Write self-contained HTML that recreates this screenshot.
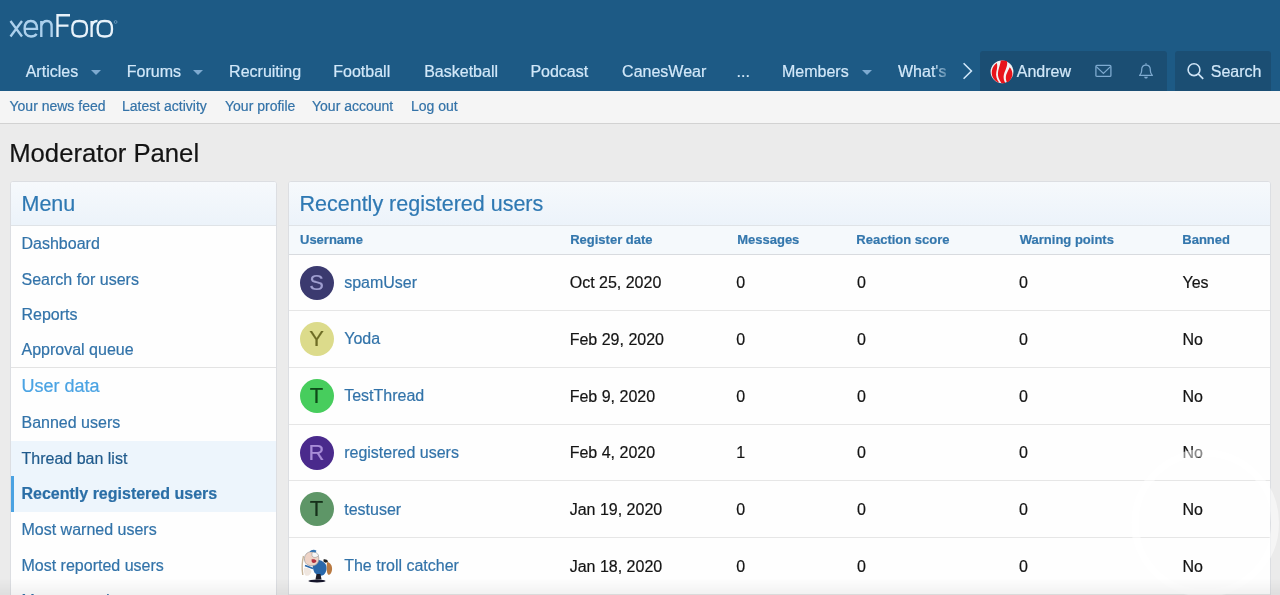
<!DOCTYPE html>
<html><head><meta charset="utf-8">
<style>
*{box-sizing:border-box;margin:0;padding:0}
html,body{width:1280px;height:595px;overflow:hidden}
body{background:#ebebeb;font-family:"Liberation Sans",sans-serif;color:#141414;position:relative}
#root{-webkit-text-stroke-width:0.2px}
.a{position:absolute;white-space:nowrap}
#hdr{position:absolute;left:0;top:0;width:1280px;height:91px;background:#1d5a85}
.nav{font-size:16px;color:#d2e8f9;line-height:18px}
.arr{position:absolute;width:0;height:0;border-left:5px solid transparent;border-right:5px solid transparent;border-top:5px solid #7eaad0}
#ugrp{position:absolute;left:980px;top:51px;width:187px;height:40px;background:#1b4e73;border-radius:3px 3px 0 0}
#sgrp{position:absolute;left:1175px;top:51px;width:96px;height:40px;background:#1b4e73;border-radius:3px 3px 0 0}
#sub{position:absolute;left:0;top:91px;width:1280px;height:33px;background:#f5f5f5;border-bottom:1px solid #d2d2d2}
.sl{font-size:14px;color:#3473a8;line-height:16px}
h1{position:absolute;left:9.2px;top:137.9px;font-size:25.7px;font-weight:400;line-height:30px;color:#141414;white-space:nowrap}
.blk{position:absolute;background:#fefefe;border:1px solid #dcdee2;border-radius:3px;overflow:hidden}
.bh{position:absolute;left:0;top:0;right:0;height:44px;background:linear-gradient(to bottom,#f6f9fc,#ecf3fa);border-bottom:1px solid #dfe3e7}
.bht{font-size:21.5px;color:#2f79b3;line-height:24px}
.mi{font-size:16px;color:#3273a9;line-height:18px}
.th{font-size:13px;font-weight:700;color:#3477ad;line-height:15px}
.td{font-size:16px;color:#141414;line-height:18px}
.un{font-size:16px;color:#3273a9;line-height:18px}
.row{position:absolute;left:0;right:0;border-bottom:1px solid #e6e6e6}
.av{position:absolute;width:34px;height:34px;border-radius:50%;font-size:22px;line-height:34px;text-align:center}
</style></head><body>
<div id="root" style="position:absolute;left:0;top:0;width:1280px;height:595px;will-change:transform">
<div id="hdr">
  <svg class="a" style="left:0;top:0" width="130" height="45" viewBox="0 0 130 45">
    <g fill="none" stroke-width="2.35" stroke-linecap="butt">
      <g stroke="#acd0ec">
        <path d="M10.5 21 L22 36.5 M22 21 L10.5 36.5"/>
        <path d="M24.6 28.8 H37 C37 23.5 34.5 21 30.8 21 C27 21 24.6 23.8 24.6 28.8 C24.6 33.6 27 36.5 31 36.5 C33.5 36.5 35.5 35.5 36.6 33.8"/>
        <path d="M41.3 37 V21 M41.3 26 C42.2 22.6 44.2 21 47 21 C50 21 51.6 23 51.6 26.5 V37"/>
      </g>
      <g stroke="#e8f2fa">
        <path d="M57.5 37 V15.2 H70 M57.5 25.6 H68.5"/>
        <path d="M79.5 21 C85.5 21 87 23.5 87 29 C87 34.5 85.5 36.5 79.5 36.5 C73.5 36.5 72.3 34.5 72.3 29 C72.3 23.5 73.5 21 79.5 21 Z"/>
        <path d="M91.6 37 V21 M91.6 27 C92 22.8 94 21 97.5 21"/>
        <path d="M104.8 21 C110.8 21 112 23.5 112 29 C112 34.5 110.8 36.5 104.8 36.5 C98.8 36.5 97.6 34.5 97.6 29 C97.6 23.5 98.8 21 104.8 21 Z"/>
      </g>
    </g>
    <circle cx="115.6" cy="22" r="1.4" fill="none" stroke="#7fa9cc" stroke-width="0.7"/>
  </svg>

  <div class="a nav" style="left:25.7px;top:63px">Articles</div>
  <div class="arr" style="left:91px;top:69.5px"></div>
  <div class="a nav" style="left:126.8px;top:63px">Forums</div>
  <div class="arr" style="left:193px;top:69.5px"></div>
  <div class="a nav" style="left:229.1px;top:63px">Recruiting</div>
  <div class="a nav" style="left:333.3px;top:63px">Football</div>
  <div class="a nav" style="left:424.2px;top:63px">Basketball</div>
  <div class="a nav" style="left:530.4px;top:63px">Podcast</div>
  <div class="a nav" style="left:622.1px;top:63px">CanesWear</div>
  <div class="a nav" style="left:736.5px;top:63px">...</div>
  <div class="a nav" style="left:782px;top:63px">Members</div>
  <div class="arr" style="left:862px;top:69.5px"></div>
  <div class="a nav" style="left:898px;top:63px;width:56px;overflow:hidden;-webkit-mask-image:linear-gradient(to right,#000 62%,rgba(0,0,0,0.2) 92%)">What's</div>
  <svg class="a" style="left:960px;top:61px" width="16" height="20" viewBox="0 0 16 20"><path d="M3.6 2.2 L11.4 10 L3.6 17.8" fill="none" stroke="#cfe6f8" stroke-width="1.6"/></svg>

  <div id="ugrp"></div>
  <svg class="a" style="left:989.5px;top:59.5px" width="24" height="24" viewBox="0 0 24 24">
    <circle cx="12" cy="11.8" r="11.4" fill="#f5f3f3"/>
    <g fill="#e8141b">
      <path d="M6.8 3 C7.6 5 7.2 8.5 6.3 12 C5.6 15.5 6.6 19.5 9.4 22.8 C6.5 22 3.5 19.5 2.2 16 C1.2 12.5 1.8 8.5 3.8 6 C4.8 4.8 5.8 3.8 6.8 3 Z"/>
      <path d="M10.8 0.6 C12.8 0.3 15 0.4 16.8 1 C17.6 2.5 17.4 5.5 15.6 9.8 C14 13.2 13.2 16 13.8 19.2 C14.1 20.8 14.7 22 15.3 22.9 C14 23.2 12.6 23.3 11.5 23.2 C10.4 21.8 9.3 20 8.6 18 C7.6 15 7.8 11.8 8.8 8.5 C9.6 5.8 10.5 3.2 10.8 0.6 Z"/>
      <path d="M19.7 7.2 C18.8 9.5 17.2 12 16.3 14.5 C15.5 17 15.7 20 16.9 22.5 C19.5 21.5 21.6 18.8 22.3 15.5 C22.8 12.5 21.8 9.5 19.7 7.2 Z"/>
    </g>
  </svg>
  <div class="a nav" style="left:1016.8px;top:63px">Andrew</div>
  <svg class="a" style="left:1094px;top:64px" width="20" height="15" viewBox="0 0 20 15">
    <rect x="1.9" y="1.4" width="15" height="11" rx="1" fill="none" stroke="#7eaad0" stroke-width="1.3"/>
    <path d="M2.3 2.6 L9.4 9.4 L16.5 2.6" fill="none" stroke="#7eaad0" stroke-width="1.3"/>
  </svg>
  <svg class="a" style="left:1137px;top:62px" width="18" height="18" viewBox="0 0 18 18">
    <path d="M9 1.2 V2.8" stroke="#7eaad0" stroke-width="1.3"/>
    <path d="M2.6 13.4 C3.9 12.2 4.7 10.9 4.7 8.6 V7.6 C4.7 4.8 6.6 3 9 3 C11.4 3 13.3 4.8 13.3 7.6 V8.6 C13.3 10.9 14.1 12.2 15.4 13.4 Z" fill="none" stroke="#7eaad0" stroke-width="1.25" stroke-linejoin="round"/>
    <path d="M7.1 14.7 H10.9 C10.6 15.9 9.9 16.6 9 16.6 C8.1 16.6 7.4 15.9 7.1 14.7 Z" fill="#7eaad0"/>
  </svg>
  <div id="sgrp"></div>
  <svg class="a" style="left:1186px;top:62px" width="19" height="19" viewBox="0 0 19 19">
    <circle cx="8" cy="7.7" r="5.9" fill="none" stroke="#cfe4f6" stroke-width="1.6"/>
    <path d="M12.2 11.9 L17.2 16.9" stroke="#cfe4f6" stroke-width="1.7"/>
  </svg>
  <div class="a nav" style="left:1210.8px;top:63px">Search</div>
</div>

<div id="sub">
  <div class="a sl" style="left:9.5px;top:7px">Your news feed</div>
  <div class="a sl" style="left:122px;top:7px">Latest activity</div>
  <div class="a sl" style="left:225px;top:7px">Your profile</div>
  <div class="a sl" style="left:312px;top:7px">Your account</div>
  <div class="a sl" style="left:411px;top:7px">Log out</div>
</div>

<h1>Moderator Panel</h1>

<!-- Menu block -->
<div class="blk" style="left:10px;top:181px;width:267px;height:440px">
  <div class="bh"><div class="a bht" style="left:10.5px;top:10px">Menu</div></div>
  <div class="a mi" style="left:10.5px;top:53px">Dashboard</div>
  <div class="a mi" style="left:10.5px;top:88.5px">Search for users</div>
  <div class="a mi" style="left:10.5px;top:123.5px">Reports</div>
  <div class="a mi" style="left:10.5px;top:158.5px">Approval queue</div>
  <div class="a" style="left:0;top:185px;width:100%;height:1px;background:#e3e3e3"></div>
  <div class="a" style="left:10.5px;top:194px;font-size:18px;line-height:20px;color:#4aa3e3">User data</div>
  <div class="a mi" style="left:10.5px;top:232px">Banned users</div>
  <div class="a" style="left:0;top:259px;width:100%;height:35px;background:#edf5fc"></div>
  <div class="a mi" style="left:10.5px;top:267.5px;color:#1f5a8c">Thread ban list</div>
  <div class="a" style="left:0;top:294px;width:100%;height:36px;background:#edf5fc"></div>
  <div class="a mi" style="left:10.5px;top:303px;font-weight:700;color:#2a6ea6">Recently registered users</div>
  <div class="a mi" style="left:10.5px;top:339px">Most warned users</div>
  <div class="a mi" style="left:10.5px;top:374.5px">Most reported users</div>
  <div class="a mi" style="left:10.5px;top:410px">Most tagged users</div>
</div>

<!-- Main block -->
<div class="blk" style="left:288px;top:181px;width:983px;height:440px">
  <div class="bh"><div class="a bht" style="left:10.5px;top:10px">Recently registered users</div></div>
  <div class="a" style="left:0;top:44px;right:0;height:29px;background:#f5f9fc;border-bottom:1px solid #d8dbdf"></div>
  <div class="a th" style="left:11px;top:50px">Username</div>
  <div class="a th" style="left:281.2px;top:50px">Register date</div>
  <div class="a th" style="left:448.2px;top:50px">Messages</div>
  <div class="a th" style="left:567.3px;top:50px">Reaction score</div>
  <div class="a th" style="left:730.8px;top:50px">Warning points</div>
  <div class="a th" style="left:893.3px;top:50px">Banned</div>
<!--ROWS-->
  <div class="row" style="top:72.50px;height:56.70px"></div>
  <div class="av" style="left:10.5px;top:83.50px;background:#3b3a6f;color:#a09fd0">S</div>
  <div class="a un" style="left:55.2px;top:91.70px">spamUser</div>
  <div class="a td" style="left:280.7px;top:92.30px">Oct 25, 2020</div>
  <div class="a td" style="left:447.3px;top:92.30px">0</div>
  <div class="a td" style="left:568px;top:92.30px">0</div>
  <div class="a td" style="left:730px;top:92.30px">0</div>
  <div class="a td" style="left:893.5px;top:92.30px">Yes</div>
  <div class="row" style="top:129.20px;height:56.70px"></div>
  <div class="av" style="left:10.5px;top:140.20px;background:#dcdb8b;color:#6e6c25">Y</div>
  <div class="a un" style="left:55.2px;top:148.40px">Yoda</div>
  <div class="a td" style="left:280.7px;top:149.00px">Feb 29, 2020</div>
  <div class="a td" style="left:447.3px;top:149.00px">0</div>
  <div class="a td" style="left:568px;top:149.00px">0</div>
  <div class="a td" style="left:730px;top:149.00px">0</div>
  <div class="a td" style="left:893.5px;top:149.00px">No</div>
  <div class="row" style="top:185.90px;height:56.70px"></div>
  <div class="av" style="left:10.5px;top:196.90px;background:#47cd5d;color:#0e4a18">T</div>
  <div class="a un" style="left:55.2px;top:205.10px">TestThread</div>
  <div class="a td" style="left:280.7px;top:205.70px">Feb 9, 2020</div>
  <div class="a td" style="left:447.3px;top:205.70px">0</div>
  <div class="a td" style="left:568px;top:205.70px">0</div>
  <div class="a td" style="left:730px;top:205.70px">0</div>
  <div class="a td" style="left:893.5px;top:205.70px">No</div>
  <div class="row" style="top:242.60px;height:56.70px"></div>
  <div class="av" style="left:10.5px;top:253.60px;background:#4a2a8c;color:#a98ed8">R</div>
  <div class="a un" style="left:55.2px;top:261.80px">registered users</div>
  <div class="a td" style="left:280.7px;top:262.40px">Feb 4, 2020</div>
  <div class="a td" style="left:447.3px;top:262.40px">1</div>
  <div class="a td" style="left:568px;top:262.40px">0</div>
  <div class="a td" style="left:730px;top:262.40px">0</div>
  <div class="a td" style="left:893.5px;top:262.40px">No</div>
  <div class="row" style="top:299.30px;height:56.70px"></div>
  <div class="av" style="left:10.5px;top:310.30px;background:#5e9667;color:#15301a">T</div>
  <div class="a un" style="left:55.2px;top:318.50px">testuser</div>
  <div class="a td" style="left:280.7px;top:319.10px">Jan 19, 2020</div>
  <div class="a td" style="left:447.3px;top:319.10px">0</div>
  <div class="a td" style="left:568px;top:319.10px">0</div>
  <div class="a td" style="left:730px;top:319.10px">0</div>
  <div class="a td" style="left:893.5px;top:319.10px">No</div>
  <div class="row" style="top:356.00px;height:56.70px"></div>
  <svg class="a" style="left:10.5px;top:367.00px" width="34" height="34" viewBox="0 0 34 34"><ellipse cx="17" cy="32" rx="8.6" ry="1.5" fill="#15152a"/><path d="M3.5 7 C2 13 1.8 20 2.8 26" stroke="#c8b59a" stroke-width="1.4" fill="none"/><path d="M27.2 13 C30.5 13.5 32.5 17 32 21 C31.5 24.5 29.5 26.5 28 25.5 C26.5 23.5 26.3 17 27.2 13 Z" fill="#b97a42"/><path d="M14 11 C18 10 23 11.5 25.5 15 C27.5 18.5 26.5 23.5 23.5 26 C20.5 27.5 16.5 26.5 14.5 23.5 C12.5 20 12 14 14 11 Z" fill="#2a68aa"/><path d="M23.5 10.5 C25.5 10 27.5 11 28 12.5 C27 14 24.5 14 23.5 12.5 Z" fill="#1d1d1d"/><path d="M16.5 25 L15.5 30.5 L21.5 30.5 L20.5 25 Z" fill="#1d1d2a"/><path d="M4.5 11 C4 6 7 3 11 2.8 C15.5 2.6 18.8 5.5 18.8 9.8 C18.8 14 16 16.8 12 16.8 C7.5 16.8 5 14.5 4.5 11 Z" fill="#eed3c6" stroke="#9a9a9a" stroke-width="0.7"/><path d="M12 3.5 C14.5 2.5 17.5 3.5 18.5 6.5 C16.5 9 13.5 9 12 7 Z" fill="#f7f7f7" stroke="#888" stroke-width="0.5"/><path d="M9.5 3 C11 0.5 14.5 0 16.5 1.8 L15.5 3.6 C13.5 2.8 11.5 3 9.5 3 Z" fill="#3a78b5"/><path d="M11.5 10.5 C13 9.8 15.8 10.2 16.5 12 C16 14 13 14.6 11.8 13 Z" fill="#b3303f"/><path d="M4 19 C6 18 10 19 11.5 22 C11 25.5 8.5 27.5 5.5 26.5 C4 24.5 3.5 21.5 4 19 Z" fill="#efe6df"/><path d="M5 16.5 L13 19.5" stroke="#2a68aa" stroke-width="1.8"/></svg>
  <div class="a un" style="left:55.2px;top:375.20px">The troll catcher</div>
  <div class="a td" style="left:280.7px;top:375.80px">Jan 18, 2020</div>
  <div class="a td" style="left:447.3px;top:375.80px">0</div>
  <div class="a td" style="left:568px;top:375.80px">0</div>
  <div class="a td" style="left:730px;top:375.80px">0</div>
  <div class="a td" style="left:893.5px;top:375.80px">No</div>
<!--/ROWS-->
</div>
<div class="a" style="left:11px;top:476px;width:3px;height:36px;background:#4aa2e2"></div>
<div class="a" style="left:1131px;top:449px;width:148px;height:148px;border-radius:50%;border:8px solid rgba(255,255,255,0.5);filter:blur(0.6px)"></div>
<div class="a" style="left:0;top:578px;width:1280px;height:17px;background:linear-gradient(to bottom,rgba(0,0,0,0),rgba(0,0,0,0.05))"></div>
</div>
</body></html>
